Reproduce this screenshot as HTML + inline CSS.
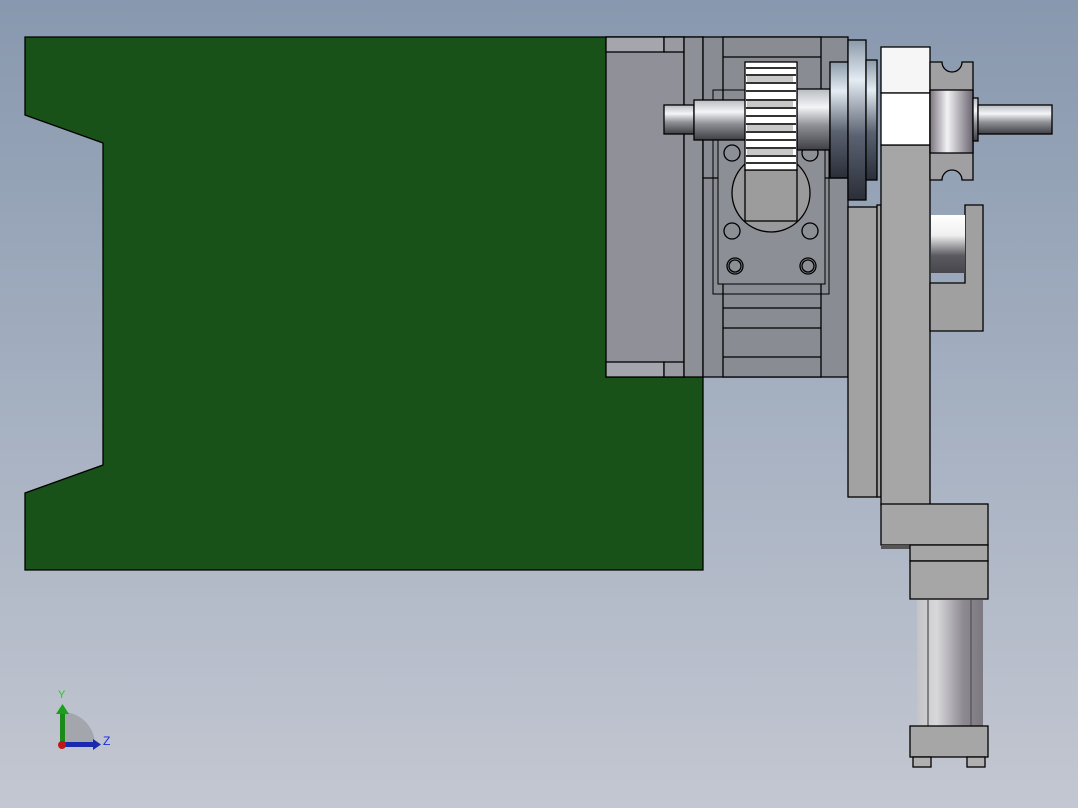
<!DOCTYPE html>
<html><head><meta charset="utf-8"><style>
html,body{margin:0;padding:0}
body{width:1078px;height:808px;overflow:hidden;background:linear-gradient(#8898ae,#a5b0c1 50%,#c3c7d1);font-family:"Liberation Sans",sans-serif}
svg{position:absolute;left:0;top:0}
</style></head><body>
<svg width="1078" height="808" viewBox="0 0 1078 808" xmlns="http://www.w3.org/2000/svg">
<defs>
<linearGradient id="sh" x1="0" y1="0" x2="0" y2="1">
<stop offset="0" stop-color="#b8bcc2"/><stop offset="0.3" stop-color="#f4f5f7"/><stop offset="0.6" stop-color="#8d8f95"/><stop offset="1" stop-color="#3e3f45"/></linearGradient>
<linearGradient id="disc" x1="0" y1="0" x2="0" y2="1">
<stop offset="0" stop-color="#8b9aa8"/><stop offset="0.25" stop-color="#e4ecf4"/><stop offset="0.6" stop-color="#5a6170"/><stop offset="1" stop-color="#2a2e38"/></linearGradient>
<linearGradient id="rol" x1="0" y1="0" x2="0" y2="1">
<stop offset="0" stop-color="#ffffff"/><stop offset="0.35" stop-color="#f0f0f0"/><stop offset="0.7" stop-color="#5a5a60"/><stop offset="1" stop-color="#46464c"/></linearGradient>
<linearGradient id="cyl" x1="0" y1="0" x2="1" y2="0">
<stop offset="0" stop-color="#c4c4c8"/><stop offset="0.3" stop-color="#d8d8da"/><stop offset="0.7" stop-color="#8e8a92"/><stop offset="1" stop-color="#7c7880"/></linearGradient>
<linearGradient id="pul" x1="0" y1="0" x2="1" y2="0">
<stop offset="0" stop-color="#7a7480"/><stop offset="0.4" stop-color="#f2f2f4"/><stop offset="1" stop-color="#6a6470"/></linearGradient>
</defs>
<g stroke="#000" stroke-width="1.3">
<path d="M25,37 H703 V570 H25 V493 L103,465 V143 L25,115 Z" fill="#185218"/>
<rect x="606" y="37" width="78" height="340" fill="#909198"/>
<rect x="606" y="37" width="58" height="15" fill="#a4a5ad"/>
<rect x="664" y="37" width="20" height="15" fill="#9a9ba2"/>
<rect x="606" y="362" width="58" height="15" fill="#a4a5ad"/>
<rect x="664" y="362" width="20" height="15" fill="#9a9ba2"/>
<rect x="684" y="37" width="19" height="340" fill="#8e9097"/>
<rect x="703" y="37" width="145" height="340" fill="#8a8c93"/>
<rect x="723" y="37" width="98" height="340" fill="#8a8c93"/>
<line x1="723" y1="57" x2="821" y2="57"/>
<line x1="703" y1="178" x2="723" y2="178"/>
<line x1="821" y1="178" x2="848" y2="178"/>
<rect x="713" y="90" width="116" height="204" fill="none" stroke-width="1"/>
<rect x="718" y="103" width="107" height="181" fill="#8d8f96" stroke-width="1"/>
<line x1="723" y1="308" x2="821" y2="308"/>
<line x1="723" y1="328" x2="821" y2="328"/>
<line x1="723" y1="357" x2="821" y2="357"/>
<circle cx="771" cy="193" r="39" fill="#9a9a9c"/>
<rect x="745" y="170" width="52" height="51" fill="#9c9c9c"/>
<g fill="#8d8f96"><circle cx="732" cy="153" r="8"/><circle cx="810" cy="153" r="8"/><circle cx="732" cy="231" r="8"/><circle cx="810" cy="231" r="8"/><circle cx="735" cy="266" r="8"/><circle cx="735" cy="266" r="6"/><circle cx="808" cy="266" r="8"/><circle cx="808" cy="266" r="6"/></g>
<rect x="664" y="105" width="30" height="29" fill="url(#sh)"/>
<rect x="694" y="100" width="55" height="40" fill="url(#sh)"/>
<rect x="797" y="89" width="33" height="61" fill="url(#sh)"/>
<rect x="745" y="62" width="52" height="108" fill="#fff"/>
<g stroke="#333" stroke-width="2">
<line x1="746" y1="68" x2="796" y2="68"/><line x1="746" y1="75" x2="796" y2="75"/>
<line x1="746" y1="83" x2="796" y2="83"/><line x1="746" y1="91" x2="796" y2="91"/>
<line x1="746" y1="100" x2="796" y2="100"/><line x1="746" y1="108" x2="796" y2="108"/>
<line x1="746" y1="116" x2="796" y2="116"/><line x1="746" y1="124" x2="796" y2="124"/>
<line x1="746" y1="132" x2="796" y2="132"/><line x1="746" y1="140" x2="796" y2="140"/>
<line x1="746" y1="148" x2="796" y2="148"/><line x1="746" y1="156" x2="796" y2="156"/>
<line x1="746" y1="163" x2="796" y2="163"/>
</g>
<rect x="747" y="76" width="46" height="6" fill="#c8c8c8" stroke="none"/>
<rect x="747" y="101" width="46" height="6" fill="#c8c8c8" stroke="none"/>
<rect x="747" y="125" width="46" height="6" fill="#c8c8c8" stroke="none"/>
<rect x="747" y="149" width="46" height="6" fill="#c8c8c8" stroke="none"/>
<rect x="830" y="62" width="18" height="116" fill="url(#disc)"/>
<rect x="848" y="40" width="18" height="160" fill="url(#disc)"/>
<rect x="866" y="60" width="11" height="120" fill="url(#disc)"/>
<rect x="848" y="207" width="29" height="290" fill="#a2a2a2"/>
<rect x="877" y="205" width="4" height="292" fill="#a2a2a2"/>
<rect x="881" y="145" width="49" height="360" fill="#a6a6a6"/>
<rect x="881" y="47" width="49" height="46" fill="#f6f6f6"/>
<rect x="881" y="93" width="49" height="52" fill="#fff"/>
<path d="M930,62 H942 A10,10 0 0 0 962,62 H973 V180 H962 A10,10 0 0 0 942,180 H930 Z" fill="#a0a0a2"/>
<rect x="930" y="90" width="43" height="63" fill="url(#pul)"/>
<rect x="973" y="98" width="5" height="43" fill="url(#sh)"/>
<rect x="978" y="105" width="74" height="29" fill="url(#sh)"/>
<path d="M930,283 H965 V205 H983 V331 H930 Z" fill="#a0a0a0"/>
<rect x="931" y="215" width="34" height="58" fill="url(#rol)" stroke="none"/>
<rect x="881" y="504" width="107" height="41" fill="#a6a6a6"/>
<rect x="881" y="545" width="30" height="4" fill="#555" stroke="none"/>
<rect x="910" y="545" width="78" height="16" fill="#a6a6a6"/>
<rect x="910" y="561" width="78" height="38" fill="#a6a6a6"/>
<rect x="917" y="600" width="66" height="126" fill="url(#cyl)" stroke="none"/>
<line x1="928" y1="600" x2="928" y2="726" stroke="#555"/>
<line x1="971" y1="600" x2="971" y2="726" stroke="#555"/>
<rect x="910" y="726" width="78" height="31" fill="#a6a6a6"/>
<rect x="913" y="757" width="18" height="10" fill="#b0b0b0"/>
<rect x="967" y="757" width="18" height="10" fill="#b0b0b0"/>
</g>
<path d="M62,745 V712 A33,33 0 0 1 95,745 Z" fill="#a3a6ad"/>
<rect x="60" y="712" width="5" height="33" fill="#1a8a1a"/>
<path d="M56,714 L62.5,704 L69,714 Z" fill="#1aa01a"/>
<rect x="62" y="742" width="33" height="5" fill="#1a2ab0"/>
<path d="M93,739 L101,744.5 L93,750 Z" fill="#1a2ab0"/>
<circle cx="62" cy="745" r="4" fill="#c01818"/>
<text x="58" y="698" font-size="11" fill="#22cc22">Y</text>
<text x="103" y="745" font-size="12" fill="#1a2ae0">Z</text>
</svg>
</body></html>
